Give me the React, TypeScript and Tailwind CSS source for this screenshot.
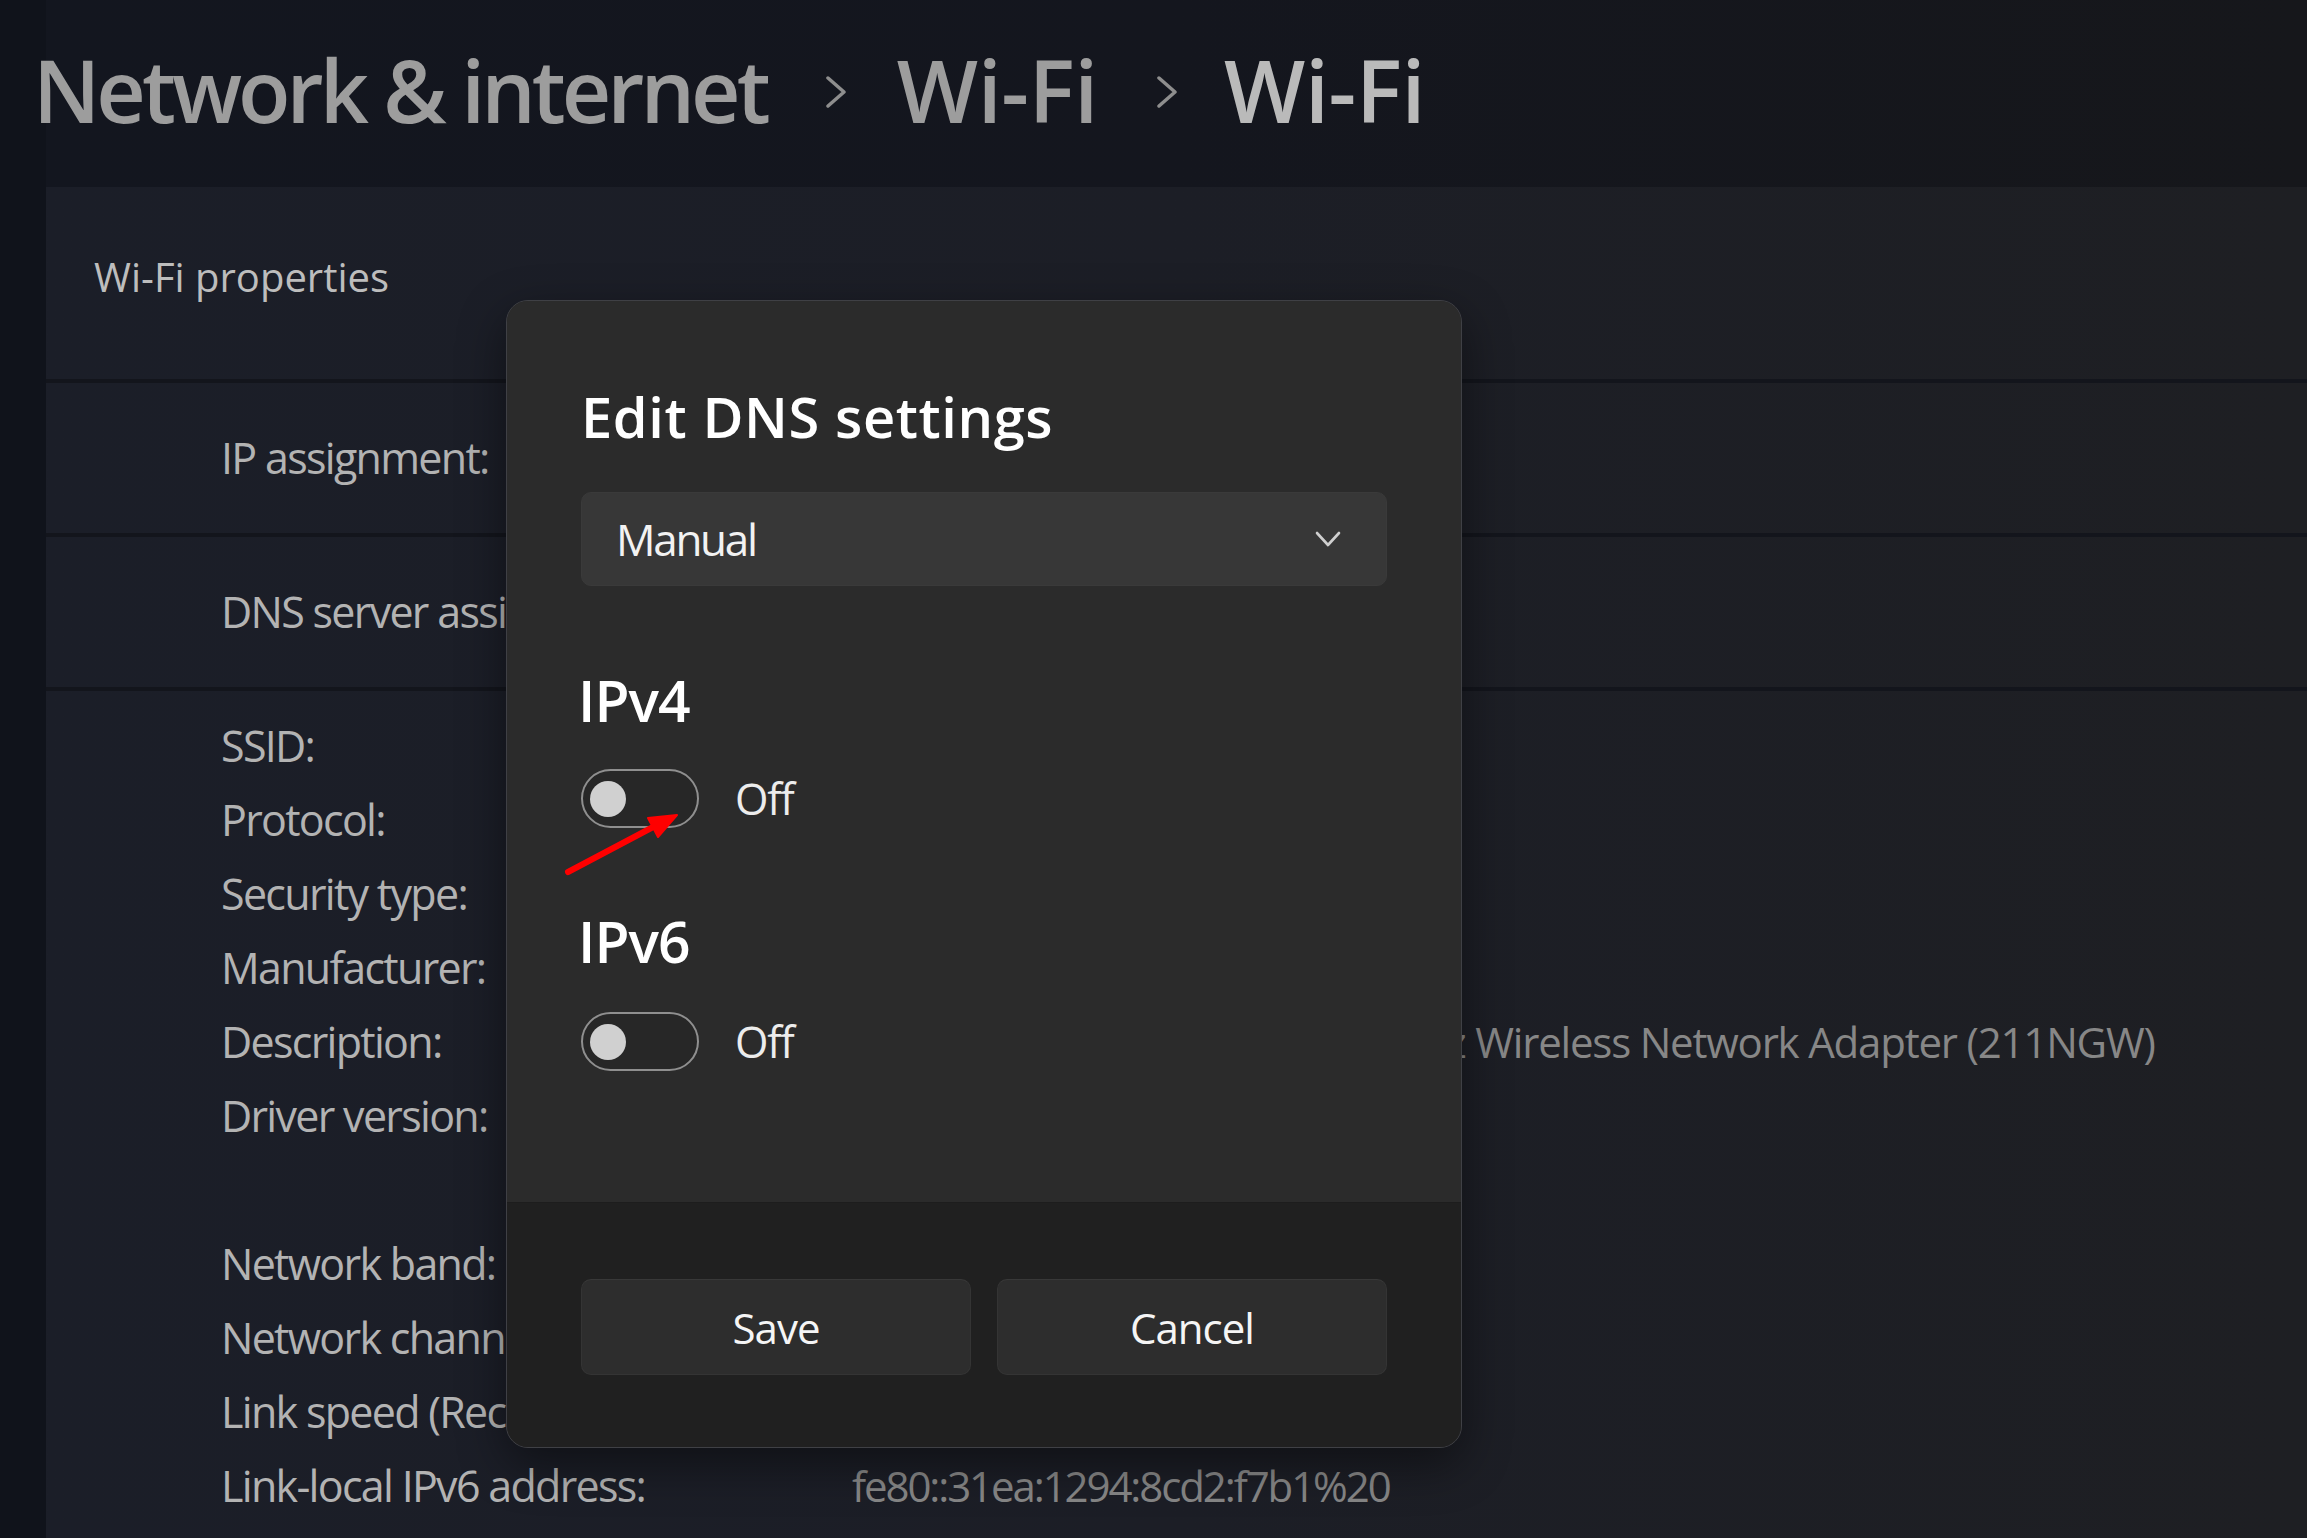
import React from 'react';

const details: { label: string; value: string; track?: string }[] = [
  { label: 'SSID:', value: '' },
  { label: 'Protocol:', value: '' },
  { label: 'Security type:', value: '' },
  { label: 'Manufacturer:', value: '' },
  {
    label: 'Description:',
    value: 'Killer(R) Wi-Fi 6E AX1675i 160MHz Wireless Network Adapter (211NGW)',
    track: 'tracking-[-1.2px]',
  },
  { label: 'Driver version:', value: '' },
  { label: '', value: '' },
  { label: 'Network band:', value: '' },
  { label: 'Network channel:', value: '' },
  { label: 'Link speed (Receive/Transmit):', value: '' },
  { label: 'Link-local IPv6 address:', value: 'fe80::31ea:1294:8cd2:f7b1%20', track: 'tracking-[-2.1px]' },
];

const Crumb = () => (
  <svg width="22" height="32" viewBox="0 0 22 32" className="ml-[58px] mr-[50px] mt-[4px]">
    <path d="M3 2 L19 16 L3 30" fill="none" stroke="#8e8e8e" strokeWidth="3.5" strokeLinecap="round" strokeLinejoin="round" />
  </svg>
);

const Toggle = () => (
  <div className="flex items-center">
    <div className="flex items-center w-[118px] h-[59px] rounded-full border-2 border-[#8f8f8f] bg-[#272727] pl-[7px]">
      <div className="w-[36px] h-[36px] rounded-full bg-[#d0d0d0]" />
    </div>
    <span className="ml-[36px] text-[43px] leading-none text-[#ececec] tracking-[-1.3px]">Off</span>
  </div>
);

const App: React.FC = () => {
  return (
    <div className="relative w-[2307px] h-[1538px] overflow-hidden flex bg-[#13161f] font-['Open_Sans','Noto_Sans',sans-serif]">
      {/* nav pane edge */}
      <div className="w-[46px] h-full bg-[#10131b]" />

      <div className="flex-1 flex flex-col bg-gradient-to-r from-[#13161f] via-[#14161e] to-[#16171b]">
        {/* breadcrumb title */}
        <div className="h-[187px] flex items-start pt-[47px]">
          <h1 className="-ml-[13px] flex items-center text-[86px] leading-none font-semibold text-[#9d9d9d]">
            <span className="tracking-[-4px]">Network &amp; internet</span>
            <Crumb />
            <span className="tracking-[-0.3px]">Wi-Fi</span>
            <Crumb />
            <span className="-ml-[4px] tracking-[-0.3px] text-[#bababa]">Wi-Fi</span>
          </h1>
        </div>

        {/* properties card */}
        <div className="flex-1 flex flex-col bg-gradient-to-r from-[#1b1e28] via-[#1c1e26] to-[#1e1f23]">
          <div className="h-[192px] flex items-center pl-[48px] pb-[12px]">
            <span className="text-[40px] text-[#bdbdbd]">Wi-Fi properties</span>
          </div>
          <div className="h-[4px] bg-[#13151c]" />
          <div className="h-[150px] flex items-center pl-[175px] text-[43px] text-[#b3b3b3] tracking-[-1.7px]">
            <span>IP assignment:</span>
          </div>
          <div className="h-[4px] bg-[#13151c]" />
          <div className="h-[150px] flex items-center pl-[175px] text-[43px] text-[#b3b3b3] tracking-[-1.7px]">
            <span>DNS server assignment:</span>
          </div>
          <div className="h-[4px] bg-[#13151c]" />
          <div className="pt-[18px] pl-[175px] leading-[74px]">
            {details.map((row, i) => (
              <div key={i} className="flex h-[74px] whitespace-nowrap">
                <span className="w-[631px] shrink-0 text-[43px] tracking-[-1.7px] text-[#b3b3b3]">{row.label}</span>
                <span className={`text-[42px] text-[#878787] ${row.track ?? ''}`}>{row.value}</span>
              </div>
            ))}
          </div>
        </div>
      </div>

      {/* Edit DNS settings dialog */}
      <div className="absolute left-[506px] top-[300px] w-[956px] h-[1148px] rounded-[22px] border border-[#3f4045] bg-[#2b2b2b] overflow-hidden flex flex-col shadow-[0_16px_48px_rgba(0,0,0,0.45)]">
        <div className="h-[901px] flex flex-col px-[74px] pt-[87px] bg-[#2b2b2b]">
          <h2 className="text-[56px] leading-none font-semibold text-white tracking-[0.6px]">Edit DNS settings</h2>
          <div className="mt-[48px] h-[94px] flex items-center justify-between rounded-[10px] border border-[#3a3a3a] bg-[#373737] pl-[34px] pr-[45px]">
            <span className="text-[44px] text-[#f2f2f2] tracking-[-2.3px]">Manual</span>
            <svg width="26" height="17" viewBox="0 0 26 17">
              <path d="M2 2 L13 14 L24 2" fill="none" stroke="#cfcfcf" strokeWidth="2.6" strokeLinecap="round" strokeLinejoin="round" />
            </svg>
          </div>
          <h3 className="mt-[86px] -ml-[3px] text-[57px] leading-none font-semibold text-white tracking-[-1px]">IPv4</h3>
          <div className="mt-[40px]">
            <Toggle />
          </div>
          <h3 className="mt-[85px] -ml-[3px] text-[57px] leading-none font-semibold text-white tracking-[-1px]">IPv6</h3>
          <div className="mt-[42px]">
            <Toggle />
          </div>
        </div>
        <div className="flex-1 border-t border-[#1d1d1d] bg-[#202020] px-[74px] pt-[76px] flex gap-[26px]">
          <button className="w-[390px] h-[96px] rounded-[10px] border border-[#343434] border-t-[#383838] bg-[#2d2d2d] text-[42px] text-[#f5f5f5] tracking-[-1px]">
            Save
          </button>
          <button className="w-[390px] h-[96px] rounded-[10px] border border-[#343434] border-t-[#383838] bg-[#2d2d2d] text-[42px] text-[#f5f5f5] tracking-[-1px]">
            Cancel
          </button>
        </div>
      </div>

      {/* red annotation arrow */}
      <svg className="absolute left-[555px] top-[800px] pointer-events-none" width="135" height="85" viewBox="555 800 135 85">
        <line x1="568" y1="872" x2="655" y2="826" stroke="#ff0000" strokeWidth="6" strokeLinecap="round" />
        <polygon points="677,815 648,818 658,837" fill="#ff0000" stroke="#ff0000" strokeWidth="2" strokeLinejoin="round" />
      </svg>
    </div>
  );
};

export default App;
